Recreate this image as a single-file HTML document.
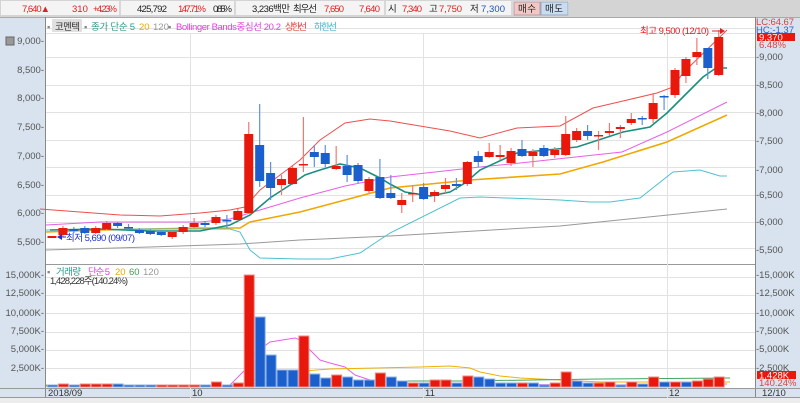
<!DOCTYPE html>
<html><head><meta charset="utf-8"><style>
body{margin:0;width:800px;height:403px;overflow:hidden;background:#fff;font-family:"Liberation Sans","Noto Sans CJK KR",sans-serif}
svg text{font-family:"Liberation Sans","Noto Sans CJK KR",sans-serif;font-size:9.5px}
</style></head><body>
<svg id="s" width="800" height="403" viewBox="0 0 800 403" xmlns="http://www.w3.org/2000/svg">
<rect width="800" height="403" fill="#fff"/>
<rect x="0" y="0" width="800" height="17" fill="#d4d4d4"/>
<rect x="1" y="1" width="568" height="14" fill="#f4f4f4"/>
<g stroke="#bbb"><line x1="120" y1="1" x2="120" y2="15"/><line x1="235" y1="1" x2="235" y2="15"/><line x1="385" y1="1" x2="385" y2="15"/><line x1="512" y1="1" x2="512" y2="15"/></g>
<rect x="514" y="2" width="26" height="13" fill="#f2c8c4" stroke="#b9a"/>
<rect x="541" y="2" width="27" height="13" fill="#c9dcf2" stroke="#9ab"/>
<g>
<text x="22" y="12" fill="#e02020" textLength="28">7,640▲</text>
<text x="72" y="12" fill="#e02020">310</text>
<text x="93" y="12" fill="#e02020" textLength="24">+4.23%</text>
<text x="137" y="12" fill="#222" textLength="30">425,792</text>
<text x="178" y="12" fill="#e02020" textLength="28">147.71%</text>
<text x="213" y="12" fill="#222" textLength="19">0.85%</text>
<text x="252" y="12" fill="#222" textLength="38">3,236백만</text>
<text x="293" y="12" fill="#222" textLength="24">최우선</text>
<text x="324" y="12" fill="#e02020" textLength="20">7,650</text>
<text x="359" y="12" fill="#e02020" textLength="21">7,640</text>
<text x="388" y="12" fill="#222">시</text>
<text x="402" y="12" fill="#e02020" textLength="20">7,340</text>
<text x="429" y="12" fill="#222">고</text>
<text x="439" y="12" fill="#e02020" textLength="23">7,750</text>
<text x="470" y="12" fill="#222">저</text>
<text x="481" y="12" fill="#2050c0" textLength="24">7,300</text>
<text x="518" y="12" fill="#222" textLength="18">매수</text>
<text x="545" y="12" fill="#222" textLength="18">매도</text>
</g>
<rect x="0" y="17" width="46" height="386" fill="#d8e3ef"/>
<rect x="755" y="17" width="45" height="386" fill="#d8e3ef"/>
<rect x="0" y="388" width="800" height="10" fill="#d8e3ef"/>
<rect x="0" y="398" width="800" height="5" fill="#ececec"/>
<line x1="0" y1="17.5" x2="800" y2="17.5" stroke="#aaa"/>
<line x1="45.5" y1="17" x2="45.5" y2="398" stroke="#888"/>
<line x1="755.5" y1="17" x2="755.5" y2="398" stroke="#888"/>
<line x1="46" y1="264.5" x2="755" y2="264.5" stroke="#999"/>
<line x1="0" y1="388.5" x2="800" y2="388.5" stroke="#999"/>
<line x1="0" y1="397.5" x2="800" y2="397.5" stroke="#999"/>
<line x1="46" y1="33.5" x2="755" y2="33.5" stroke="#e4e4e4"/>
<g id="grid" stroke="#e2e2e2"></g>
<rect x="6" y="37" width="8" height="8" fill="#999" stroke="#666"/>
<g id="lab" font-size="9" fill="#555"></g>
<rect x="52" y="19" width="30" height="13" fill="#e0e0e0"/>
<g>
<text x="47" y="30" fill="#888">▪</text><text x="55" y="30" fill="#333" textLength="25">코멘텍</text>
<text x="84" y="30" fill="#888">▪</text><text x="91" y="30" fill="#2a9a8a" textLength="44">종가 단순 5</text>
<text x="139" y="30" fill="#e8a800">20</text><text x="153" y="30" fill="#999">120</text>
<text x="168" y="30" fill="#888">▪</text><text x="176" y="30" fill="#e040e0" textLength="105">Bollinger Bands중심선 20.2</text>
<text x="285" y="30" fill="#e84040" textLength="22">상한선</text><text x="314" y="30" fill="#40b8d0" textLength="23">하한선</text>
<text x="47" y="275" fill="#888">▪</text><text x="56" y="275" fill="#2a9a8a" textLength="25">거래량</text>
<text x="88" y="275" fill="#e040e0" textLength="22">단순 5</text><text x="115" y="275" fill="#e8a800">20</text>
<text x="129" y="275" fill="#3aa050">60</text><text x="143" y="275" fill="#999">120</text>
<text x="50" y="284" fill="#333" textLength="78">1,428,228주(140.24%)</text>
</g>
<g id="lines" fill="none"></g>
<g id="c"></g>
<text x="640" y="34" fill="#e02020" textLength="69">최고 9,500 (12/10)</text>
<line x1="712" y1="31" x2="724" y2="31" stroke="#e02020"/><path d="M720 28 L725 31 L720 34" fill="#e02020"/>
<text x="66" y="241" fill="#2030d0" textLength="69">최저 5,690 (09/07)</text>
<line x1="58" y1="237" x2="66" y2="237" stroke="#2030d0"/><path d="M62 234 L57 237 L62 240" fill="#2030d0"/>
<text x="756" y="25" fill="#e04040" textLength="38">LC:64.67</text>
<text x="756" y="33" fill="#3060d0" textLength="38">HC:-1.37</text>
<rect x="757" y="33" width="38" height="8" fill="#e8180c"/>
<text x="759" y="40.5" fill="#fff">9,370</text>
<text x="759" y="48" fill="#e04040">6.48%</text>
<rect x="757" y="371" width="39" height="8" fill="#e8180c"/>
<text x="759" y="378.5" fill="#fff">1,428K</text>
<text x="759" y="386" fill="#e04040">140.24%</text>
<g fill="#333">
<text x="48" y="396">2018/09</text><text x="192" y="396">10</text><text x="425" y="396">11</text><text x="669" y="396">12</text><text x="762" y="396">12/10</text>
</g>
</svg>
<script>
var NS="http://www.w3.org/2000/svg";
function el(p,t,a,tx){var e=document.createElementNS(NS,t);for(var k in a)e.setAttribute(k,a[k]);if(tx)e.textContent=tx;document.getElementById(p).appendChild(e);return e;}
[28,57,85,112,140,167,195,222,248,277,295,313,332,350,368].forEach(function(y){el('grid','line',{x1:46,y1:y+.5,x2:755,y2:y+.5})});
[190,423,667].forEach(function(x){el('grid','line',{x1:x+.5,y1:33,x2:x+.5,y2:398})});
[["9,000",41],["8,500",70],["8,000",98],["7,500",127],["7,000",156],["6,500",185],["6,000",213],["5,500",242]].forEach(function(a){el('lab','text',{x:44,y:a[1]+3,'text-anchor':'end'},a[0]+'-')});
[["9,000",57],["8,500",85],["8,000",113],["7,500",141],["7,000",170],["6,500",195],["6,000",222],["5,500",250]].forEach(function(a){el('lab','text',{x:756,y:a[1]+3},'-'+a[0])});
[["15,000K",275],["12,500K",293],["10,000K",313],["7,500K",331],["5,000K",349],["2,500K",368]].forEach(function(a){el('lab','text',{x:44,y:a[1]+3,'text-anchor':'end'},a[0]+'-');el('lab','text',{x:756,y:a[1]+3},'-'+a[0])});
var C=[["r",236,238,236,238,385,"b"],["r",228,235,226,237,384,"r"],["b",229,231,227,233,385,"b"],["b",228,233,226,234,384,"r"],["r",228,233,226,234,384,"r"],["r",223,229,221,230,384,"r"],["b",223,226,222,228,384,"b"],["b",227,228,224,230,385,"b"],["b",230,233,228,234,385,"b"],["b",231,234,229,235,385,"b"],["b",232,235,230,236,385,"r"],["r",232,237,231,239,385,"r"],["r",227,232,225,234,385,"r"],["r",223,227,218,228,385,"r"],["b",223,225,221,227,385,"b"],["r",217,223,215,225,382,"r"],["b",220,221,215,228,385,"b"],["r",211,220,209,221,383,"r"],["r",134,213,122,214,275,"r"],["b",145,181,104,187,317,"b"],["b",173,188,162,200,355,"b"],["r",179,185,175,195,370,"b"],["r",168,184,166,185,370,"b"],["r",164,165,117,172,336,"r"],["b",152,157,145,167,374,"b"],["b",153,164,145,167,378,"b"],["r",166,169,146,170,375,"r"],["b",166,175,155,182,377,"b"],["b",165,181,163,183,380,"b"],["r",179,191,177,193,380,"b"],["b",177,198,159,199,373,"r"],["b",193,198,175,199,377,"b"],["r",200,205,193,213,381,"b"],["r",193,194,185,202,383,"r"],["b",187,199,183,200,383,"b"],["r",192,196,190,202,380,"r"],["r",185,189,178,193,380,"r"],["b",184,186,178,190,383,"b"],["r",162,184,161,186,376,"r"],["b",156,162,151,167,377,"b"],["r",152,157,143,158,379,"b"],["r",155,157,145,160,383,"b"],["r",151,163,148,166,383,"b"],["b",149,156,140,157,383,"r"],["r",152,156,149,167,383,"b"],["b",148,156,145,157,385,"b"],["r",150,155,147,158,383,"r"],["r",134,155,116,156,372,"r"],["r",131,140,128,142,381,"b"],["b",131,136,125,140,383,"b"],["r",135,136,131,150,383,"r"],["r",131,133,123,136,382,"r"],["r",127,129,125,138,385,"b"],["r",119,123,113,125,382,"r"],["b",118,119,116,125,384,"b"],["r",103,119,93,123,377,"r"],["b",96,97,95,110,382,"b"],["r",70,95,68,98,382,"r"],["r",59,76,57,83,382,"b"],["r",52,57,38,65,381,"r"],["b",48,68,48,79,379,"r"],["r",37,75,30,76,377,"r"]];
var RC="#e8180c",BC="#1a5fcc";
C.forEach(function(c,i){var x=52+i*10.93,col=c[0]=="r"?RC:BC,vc=c[6]=="r"?RC:BC;
el('c','rect',{x:x-4.5,y:c[5],width:10,height:387-c[5],fill:vc,stroke:vc==RC?"#f08a84":"#8fb0e6","stroke-width":1});
el('c','line',{x1:x,y1:c[3],x2:x,y2:c[4],stroke:col==RC?"#f07a70":"#6090e0","stroke-width":1.2});
el('c','rect',{x:x-4.5,y:c[1],width:9,height:Math.max(1.5,c[2]-c[1]),fill:col});});
function pl(pts,col,w){el('lines','polyline',{points:pts,stroke:col,'stroke-width':w||1})}
pl("46,250 150,247 240,244 300,240 390,236 560,226 727,209","#999");
pl("40,209 80,212 120,215 160,216 200,213 230,210 245,207 260,190 300,160 320,140 345,123 370,119 390,121 420,126 450,131 480,138 517,128 560,126 593,108 623,101 657,93 673,87 683,73 727,30","#ec5050");
pl("46,225 100,222 200,222 230,219 250,213 300,198 345,186 390,177 480,167 520,163 622,152 667,132 727,102","#e860e8");
pl("46,232 100,230 200,228 240,228 250,222 275,217 300,212 345,200 390,188 470,180 560,174 603,162 667,142 727,115","#f0a800",1.6);
pl("46,230 150,229 230,229 240,232 250,250 260,258 300,259 330,259 360,253 390,233 460,198 480,197 560,200 590,202 610,202 640,198 673,172 700,170 720,176 727,176","#50c0d0");
pl("50,230 100,229 150,231 200,231 230,225 250,215 270,198 290,185 305,175 320,170 340,164 360,168 380,178 390,184 405,192 430,196 450,192 465,183 480,170 517,153 577,147 623,132 650,127 667,113 683,97 703,77 716,68 727,68","#1a8f80",1.6);
pl("46,385 230,385 245,370 255,353 270,342 295,338 300,340 310,350 320,360 330,363 345,367 355,375 370,380 400,383 440,384 600,385 727,384","#e860e8");
pl("46,385 240,385 260,378 290,372 330,369 420,367 450,366 470,368 480,372 500,376 520,378 600,382 730,382","#f0b000");
pl("46,386 230,385 300,381 460,381 600,379 730,378","#40a860");
</script>
</body></html>
